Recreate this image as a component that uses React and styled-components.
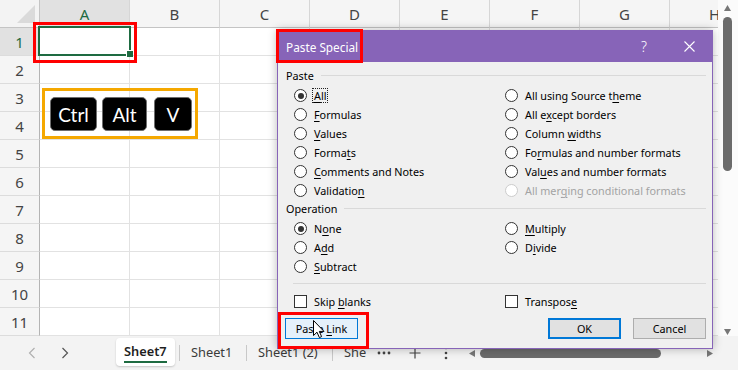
import React from 'react';
import styled, { createGlobalStyle } from 'styled-components';

const GlobalStyle = createGlobalStyle`
  html, body { margin: 0; padding: 0; background: #fff; }
  body { font-family: "Noto Sans", "Open Sans", sans-serif; }
`;

const COLS = ['A', 'B', 'C', 'D', 'E', 'F', 'G', 'H'];
const ROWS = [1, 2, 3, 4, 5, 6, 7, 8, 9, 10, 11];

const PASTE_LEFT = [
  { pre: '', key: 'A', post: 'll', checked: true, focus: true },
  { pre: '', key: 'F', post: 'ormulas' },
  { pre: '', key: 'V', post: 'alues' },
  { pre: 'Forma', key: 't', post: 's' },
  { pre: '', key: 'C', post: 'omments and Notes' },
  { pre: 'Validatio', key: 'n', post: '' },
];

const PASTE_RIGHT = [
  { pre: 'All using Source t', key: 'h', post: 'eme' },
  { pre: 'All e', key: 'x', post: 'cept borders' },
  { pre: 'Column ', key: 'w', post: 'idths' },
  { pre: 'Fo', key: 'r', post: 'mulas and number formats' },
  { pre: 'Val', key: 'u', post: 'es and number formats' },
  { pre: 'All mer', key: 'g', post: 'ing conditional formats', disabled: true },
];

const OPERATIONS = [
  { pre: 'N', key: 'o', post: 'ne', checked: true },
  { pre: 'A', key: 'd', post: 'd' },
  { pre: '', key: 'S', post: 'ubtract' },
  { pre: '', key: 'M', post: 'ultiply' },
  { pre: 'D', key: 'i', post: 'vide' },
];

const SHEETS = [
  { name: 'Sheet1', w: 66 },
  { name: 'Sheet1 (2)', w: 85 },
  { name: 'She', w: 33, last: true },
];

const Page = styled.div`
  position: relative;
  width: 738px;
  height: 370px;
  overflow: hidden;
  display: flex;
  flex-direction: column;
  background: #fff;
  font-family: "Noto Sans", "Open Sans", sans-serif;
`;

const Workspace = styled.div`
  display: flex;
  height: 336px;
`;

const Sheet = styled.div`
  flex: 1;
  min-width: 0;
  overflow: hidden;
  display: grid;
  grid-template-columns: 40px repeat(8, 90px);
  grid-auto-rows: 28px;
`;

const Corner = styled.div`
  position: relative;
  box-sizing: border-box;
  background: #f3f3f3;
  border-right: 1px solid #c4c4c4;
  border-bottom: 1px solid #c4c4c4;

  &::after {
    content: '';
    position: absolute;
    right: 4px;
    bottom: 4px;
    border-style: solid;
    border-width: 0 0 18px 18px;
    border-color: transparent transparent #dadada transparent;
  }
`;

const ColHead = styled.div`
  box-sizing: border-box;
  display: flex;
  align-items: center;
  justify-content: center;
  background: ${(p) => (p.$sel ? '#e1e1e1' : '#f5f5f5')};
  color: ${(p) => (p.$sel ? '#1e6b41' : '#444')};
  border-right: 1px solid #d6d6d6;
  border-bottom: 1px solid #c4c4c4;
  font-size: 15px;
`;

const RowHead = styled.div`
  box-sizing: border-box;
  display: flex;
  align-items: center;
  justify-content: center;
  background: ${(p) => (p.$sel ? '#e1e1e1' : '#f5f5f5')};
  color: ${(p) => (p.$sel ? '#1e6b41' : '#444')};
  border-right: 1px solid #b4b4b4;
  border-bottom: 1px solid #dcdcdc;
  font-size: 15px;
`;

const Cell = styled.div`
  position: relative;
  box-sizing: border-box;
  border-right: 1px solid #e2e2e2;
  border-bottom: 1px solid #e2e2e2;
  z-index: ${(p) => (p.$active ? 1 : 0)};
`;

const Selection = styled.div`
  position: absolute;
  left: -2px;
  top: -2px;
  right: -2px;
  bottom: -1px;
  border: 2px solid #1e6b41;
`;

const FillHandle = styled.div`
  position: absolute;
  right: -4px;
  bottom: -3px;
  width: 6px;
  height: 6px;
  background: #1e6b41;
  border: 1px solid #fff;
  border-right: 0;
  border-bottom: 0;
`;

const VScroll = styled.div`
  width: 20px;
  box-sizing: border-box;
  padding: 5px 1px 1px 0;
  display: flex;
  flex-direction: column;
  align-items: center;
  background: #fbfbfb;
`;

const VThumb = styled.div`
  width: 9px;
  height: 154px;
  margin-top: 6px;
  border-radius: 5px;
  background: #6b6b6b;
`;

const Spacer = styled.div`
  flex: 1;
`;

const TabBar = styled.div`
  height: 34px;
  display: flex;
  align-items: center;
  background: #f3f3f3;
  padding-left: 22px;
  font-size: 12.8px;
  color: #333;
`;

const NavButton = styled.div`
  width: 20px;
  display: flex;
  justify-content: center;
  margin-right: ${(p) => p.$gap || 0}px;
`;

const Tab = styled.div`
  box-sizing: border-box;
  display: flex;
  align-items: center;
  flex: none;
  width: ${(p) => p.$w}px;
  height: ${(p) => (p.$active ? '28px' : 'auto')};
  align-self: ${(p) => (p.$active ? 'flex-start' : 'center')};
  margin-top: ${(p) => (p.$active ? '2px' : '0')};
  padding-left: ${(p) => (p.$active ? '8px' : '11px')};
  margin-right: ${(p) => (p.$active ? '4px' : '0')};
  background: ${(p) => (p.$active ? '#fff' : 'transparent')};
  border-radius: 4px;
  box-shadow: ${(p) => (p.$active ? '0 1px 2px rgba(0,0,0,0.18)' : 'none')};
  font-weight: ${(p) => (p.$active ? 600 : 400)};
  color: ${(p) => (p.$active ? '#1f1f1f' : '#3a3a3a')};
  white-space: nowrap;
  overflow: hidden;
`;

const TabLabel = styled.span`
  border-bottom: 2px solid ${(p) => (p.$active ? '#1e6b41' : 'transparent')};
  padding-bottom: 1px;
  margin-top: ${(p) => (p.$active ? '1px' : '0')};
  line-height: 18px;
`;

const TabSep = styled.div`
  width: 1px;
  height: 16px;
  flex: none;
  background: #c8c8c8;
`;

const BarIcon = styled.div`
  width: 26px;
  flex: none;
  display: flex;
  justify-content: center;
  margin-left: ${(p) => p.$ml || 0}px;
  color: #444;
`;

const HScroll = styled.div`
  flex: 1;
  display: flex;
  align-items: center;
  margin-left: 10px;
  margin-right: 25px;
  height: 10px;
`;

const HThumb = styled.div`
  width: 181px;
  height: 9px;
  margin-left: 5px;
  border-radius: 5px;
  background: #6b6b6b;
`;

const Callout = styled.div`
  position: absolute;
  box-sizing: border-box;
  border: 3px solid ${(p) => p.$color || '#ff0000'};
`;

const CellCallout = styled(Callout)`
  left: 33px;
  top: 22px;
  width: 104px;
  height: 41px;
`;

const KeysCallout = styled(Callout)`
  left: 42px;
  top: 88px;
  width: 156px;
  height: 51px;
  padding: 6px 0 0 5px;
  display: flex;
  gap: 5px;
`;

const KeyCap = styled.div`
  box-sizing: border-box;
  width: ${(p) => p.$w}px;
  height: 34px;
  margin-left: ${(p) => p.$ml || 0}px;
  display: flex;
  align-items: center;
  justify-content: center;
  background: #000;
  border: 1.5px solid #6f6f6f;
  border-radius: 5px;
  color: #fff;
  font-family: "Lato", "Noto Sans", sans-serif;
  font-size: 19px;
`;

const Dialog = styled.div`
  position: absolute;
  left: 277px;
  top: 30px;
  width: 436px;
  height: 319px;
  box-sizing: border-box;
  display: flex;
  flex-direction: column;
  background: #f0f0f0;
  border: 1px solid #8764b8;
  box-shadow: 0 0 9px rgba(0, 0, 0, 0.28);
  font-family: "Noto Sans", "Open Sans", sans-serif;
  font-size: 10.8px;
  color: #000;
  z-index: 5;
`;

const TitleBar = styled.div`
  height: 31px;
  flex: none;
  display: flex;
  align-items: center;
  padding-left: 8px;
  background: #8764b8;
  color: #fff;
  font-size: 11.8px;
`;

const TitleButton = styled.div`
  width: ${(p) => p.$w}px;
  height: 31px;
  display: flex;
  align-items: center;
  justify-content: center;
  font-size: 14px;
  font-weight: 300;
`;

const TitleCallout = styled(Callout)`
  left: 276px;
  top: 29px;
  width: 87px;
  height: 34px;
  z-index: 6;
`;

const LinkCallout = styled(Callout)`
  left: 278px;
  top: 312px;
  width: 91px;
  height: 37px;
  z-index: 6;
`;

const Body = styled.div`
  flex: 1;
  display: flex;
  flex-direction: column;
  padding: 0 6px 0 8px;
`;

const GroupHeader = styled.div`
  display: flex;
  align-items: center;
  gap: 7px;
  height: 16px;
  margin-top: ${(p) => p.$mt || 0}px;
`;

const Rule = styled.div`
  flex: 1;
  height: 1px;
  background: #d9d9d9;
`;

const Divider = styled.div`
  height: 1px;
  flex: none;
  background: #d9d9d9;
  margin: 7px 0 0 7px;
`;

const OptionGrid = styled.div`
  display: grid;
  grid-auto-flow: column;
  grid-template-columns: 211px 1fr;
  grid-template-rows: repeat(${(p) => p.$rows}, 19px);
  padding-left: 8px;
  margin-top: ${(p) => p.$mt || 0}px;
`;

const Option = styled.div`
  display: flex;
  align-items: center;
  gap: 7px;
  white-space: nowrap;
  color: ${(p) => (p.$disabled ? '#a3a3a3' : '#000')};
`;

const Radio = styled.div`
  position: relative;
  box-sizing: border-box;
  width: 13px;
  height: 13px;
  flex: none;
  border-radius: 50%;
  border: 1px solid ${(p) => (p.$disabled ? '#cccccc' : '#333')};
  background: #fff;

  &::after {
    content: '';
    display: ${(p) => (p.$checked ? 'block' : 'none')};
    position: absolute;
    left: 2.5px;
    top: 2.5px;
    width: 6px;
    height: 6px;
    border-radius: 50%;
    background: #333;
  }
`;

const Checkbox = styled.div`
  box-sizing: border-box;
  width: 13px;
  height: 13px;
  flex: none;
  border: 1px solid #333;
  background: #fff;
`;

const Focus = styled.span`
  display: inline-block;
  border: 1px dotted #222;
  padding: 0 1px;
  margin-left: -2px;
  line-height: 13px;
`;

const AccessKey = styled.span`
  text-decoration: underline;
  text-underline-offset: 2px;
`;

const CheckRow = styled.div`
  display: grid;
  grid-template-columns: 211px 1fr;
  height: 19px;
  padding-left: 8px;
  margin-top: 8px;
`;

const ButtonRow = styled.div`
  display: flex;
  gap: 12px;
  margin: 7px 0 0 -1px;
`;

const DialogButton = styled.div`
  box-sizing: border-box;
  width: 73px;
  height: 21px;
  display: flex;
  align-items: center;
  justify-content: center;
  background: ${(p) => (p.$hover ? '#e5f1fb' : '#e1e1e1')};
  border: ${(p) => (p.$default ? '2px solid #0078d7' : p.$hover ? '1px solid #0078d7' : '1px solid #adadad')};
`;

const Cursor = styled.svg`
  position: absolute;
  left: 313px;
  top: 320px;
  z-index: 7;
`;

const Label = ({ o }) => {
  const text = (
    <>
      {o.pre}
      <AccessKey>{o.key}</AccessKey>
      {o.post}
    </>
  );
  return o.focus ? <Focus>{text}</Focus> : <span>{text}</span>;
};

const RadioOption = ({ o }) => (
  <Option $disabled={o.disabled}>
    <Radio $checked={o.checked} $disabled={o.disabled} />
    <Label o={o} />
  </Option>
);

const Triangle = ({ dir, color = '#777' }) => {
  const pts = {
    up: '0,6 3.5,0 7,6',
    down: '0,0 7,0 3.5,6',
    left: '6,0 6,7 0,3.5',
    right: '0,0 0,7 6,3.5',
  }[dir];
  const w = dir === 'up' || dir === 'down' ? 7 : 6;
  const h = dir === 'up' || dir === 'down' ? 6 : 7;
  return (
    <svg width={w} height={h} viewBox={`0 0 ${w} ${h}`}>
      <polygon points={pts} fill={color} />
    </svg>
  );
};

const Chevron = ({ left, color }) => (
  <svg width="8" height="12" viewBox="0 0 8 12">
    <path d={left ? 'M6.5 1 L1.5 6 L6.5 11' : 'M1.5 1 L6.5 6 L1.5 11'} fill="none" stroke={color} strokeWidth="1.2" />
  </svg>
);

export default function App() {
  return (
    <>
      <GlobalStyle />
      <Page>
        <Workspace>
          <Sheet>
            <Corner />
            {COLS.map((c) => (
              <ColHead key={c} $sel={c === 'A'}>{c}</ColHead>
            ))}
            {ROWS.map((r) => (
              <React.Fragment key={r}>
                <RowHead $sel={r === 1}>{r}</RowHead>
                {COLS.map((c) => {
                  const active = r === 1 && c === 'A';
                  return (
                    <Cell key={c} $active={active}>
                      {active && (
                        <Selection>
                          <FillHandle />
                        </Selection>
                      )}
                    </Cell>
                  );
                })}
              </React.Fragment>
            ))}
          </Sheet>
          <VScroll>
            <Triangle dir="up" />
            <VThumb />
            <Spacer />
            <Triangle dir="down" />
          </VScroll>
        </Workspace>

        <TabBar>
          <NavButton $gap={13}>
            <Chevron left color="#b0b0b0" />
          </NavButton>
          <NavButton $gap={41}>
            <Chevron color="#555" />
          </NavButton>
          <Tab $active $w={59}>
            <TabLabel $active>Sheet7</TabLabel>
          </Tab>
          {SHEETS.map((s) => (
            <React.Fragment key={s.name}>
              <TabSep />
              <Tab $w={s.w}>
                <TabLabel>{s.name}</TabLabel>
              </Tab>
            </React.Fragment>
          ))}
          <BarIcon $ml={5}>
            <svg width="14" height="4" viewBox="0 0 14 4">
              <circle cx="2" cy="2" r="1.4" fill="#444" />
              <circle cx="7" cy="2" r="1.4" fill="#444" />
              <circle cx="12" cy="2" r="1.4" fill="#444" />
            </svg>
          </BarIcon>
          <BarIcon $ml={5}>
            <svg width="12" height="12" viewBox="0 0 12 12">
              <path d="M6 0.5 V11.5 M0.5 6 H11.5" stroke="#444" strokeWidth="1.2" />
            </svg>
          </BarIcon>
          <BarIcon $ml={5}>
            <svg width="4" height="14" viewBox="0 0 4 14">
              <circle cx="2" cy="2" r="1.3" fill="#444" />
              <circle cx="2" cy="7" r="1.3" fill="#444" />
              <circle cx="2" cy="12" r="1.3" fill="#444" />
            </svg>
          </BarIcon>
          <HScroll>
            <Triangle dir="left" />
            <HThumb />
            <Spacer />
            <Triangle dir="right" />
          </HScroll>
        </TabBar>

        <CellCallout />
        <KeysCallout $color="#f5a800">
          <KeyCap $w={47}>Ctrl</KeyCap>
          <KeyCap $w={45}>Alt</KeyCap>
          <KeyCap $w={38} $ml={2}>V</KeyCap>
        </KeysCallout>

        <Dialog>
          <TitleBar>
            <span>Paste Special</span>
            <Spacer />
            <TitleButton $w={44}>?</TitleButton>
            <TitleButton $w={46}>
              <svg width="11" height="11" viewBox="0 0 11 11">
                <path d="M0.5 0.5 L10.5 10.5 M10.5 0.5 L0.5 10.5" stroke="#fff" strokeWidth="1.1" />
              </svg>
            </TitleButton>
          </TitleBar>
          <Body>
            <GroupHeader $mt={5}>
              <span>Paste</span>
              <Rule />
            </GroupHeader>
            <OptionGrid $rows={6} $mt={3}>
              {[...PASTE_LEFT, ...PASTE_RIGHT].map((o, i) => (
                <RadioOption key={i} o={o} />
              ))}
            </OptionGrid>
            <GroupHeader>
              <span>Operation</span>
              <Rule />
            </GroupHeader>
            <OptionGrid $rows={3} $mt={3}>
              {OPERATIONS.map((o, i) => (
                <RadioOption key={i} o={o} />
              ))}
            </OptionGrid>
            <Divider />
            <CheckRow>
              <Option>
                <Checkbox />
                <span>
                  Skip <AccessKey>b</AccessKey>lanks
                </span>
              </Option>
              <Option>
                <Checkbox />
                <span>
                  Transpos<AccessKey>e</AccessKey>
                </span>
              </Option>
            </CheckRow>
            <ButtonRow>
              <DialogButton $hover>
                <span>
                  Paste <AccessKey>L</AccessKey>ink
                </span>
              </DialogButton>
              <Spacer />
              <DialogButton $default>OK</DialogButton>
              <DialogButton>Cancel</DialogButton>
            </ButtonRow>
          </Body>
        </Dialog>

        <TitleCallout />
        <LinkCallout />
        <Cursor width="13" height="19" viewBox="0 0 13 19">
          <path
            d="M0.5 0.5 V15.5 L4 12.2 L6.4 17.6 L8.6 16.6 L6.3 11.4 H11 Z"
            fill="#fff"
            stroke="#000"
            strokeWidth="1"
            strokeLinejoin="round"
          />
        </Cursor>
      </Page>
    </>
  );
}
